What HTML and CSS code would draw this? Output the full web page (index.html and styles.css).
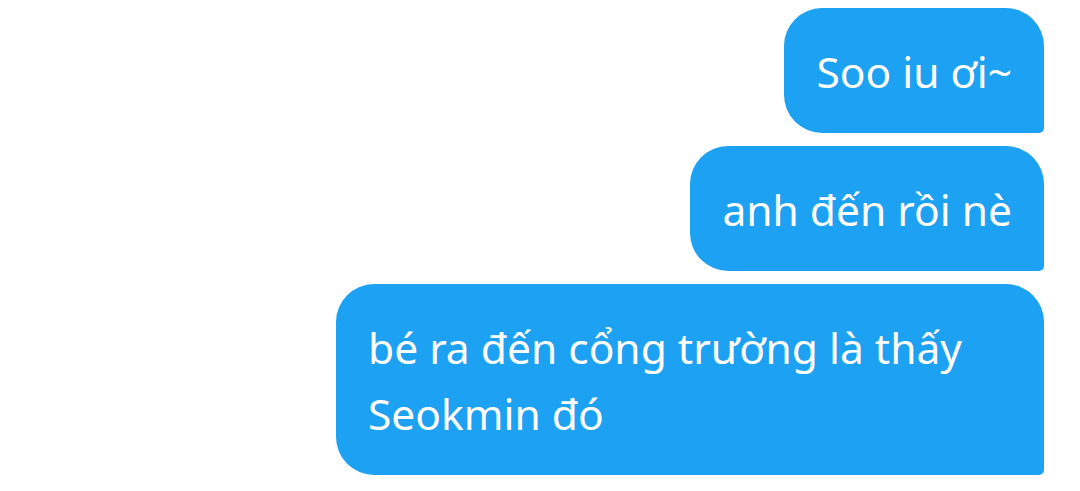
FILE: index.html
```html
<!DOCTYPE html>
<html lang="vi">
<head>
  <meta charset="UTF-8">
  <title>Tin nhắn</title>
  <link rel="stylesheet" href="styles.css">
</head>
<body>

  <div class="thread">
    <div class="bubble">Soo iu ơi~</div>
    <div class="bubble">anh đến rồi nè</div>
    <div class="bubble">bé ra đến cổng trường là thấy Seokmin đó</div>
  </div>

</body>
</html>
```

FILE: styles.css
```css
body {
  margin: 0;
  background-color: #ffffff;
  font-family: "Noto Sans", "Open Sans", sans-serif;
}

.thread {
  display: flex;
  flex-direction: column;
  align-items: flex-end;
  gap: 13px;
  padding: 8px 36px;
}

.bubble {
  max-width: 644px;
  padding: 31px 32px 28px;
  background-color: #1da1f2;
  color: #ffffff;
  font-size: 42.5px;
  line-height: 66px;
  border-radius: 38px 38px 5px 38px;
}
```
